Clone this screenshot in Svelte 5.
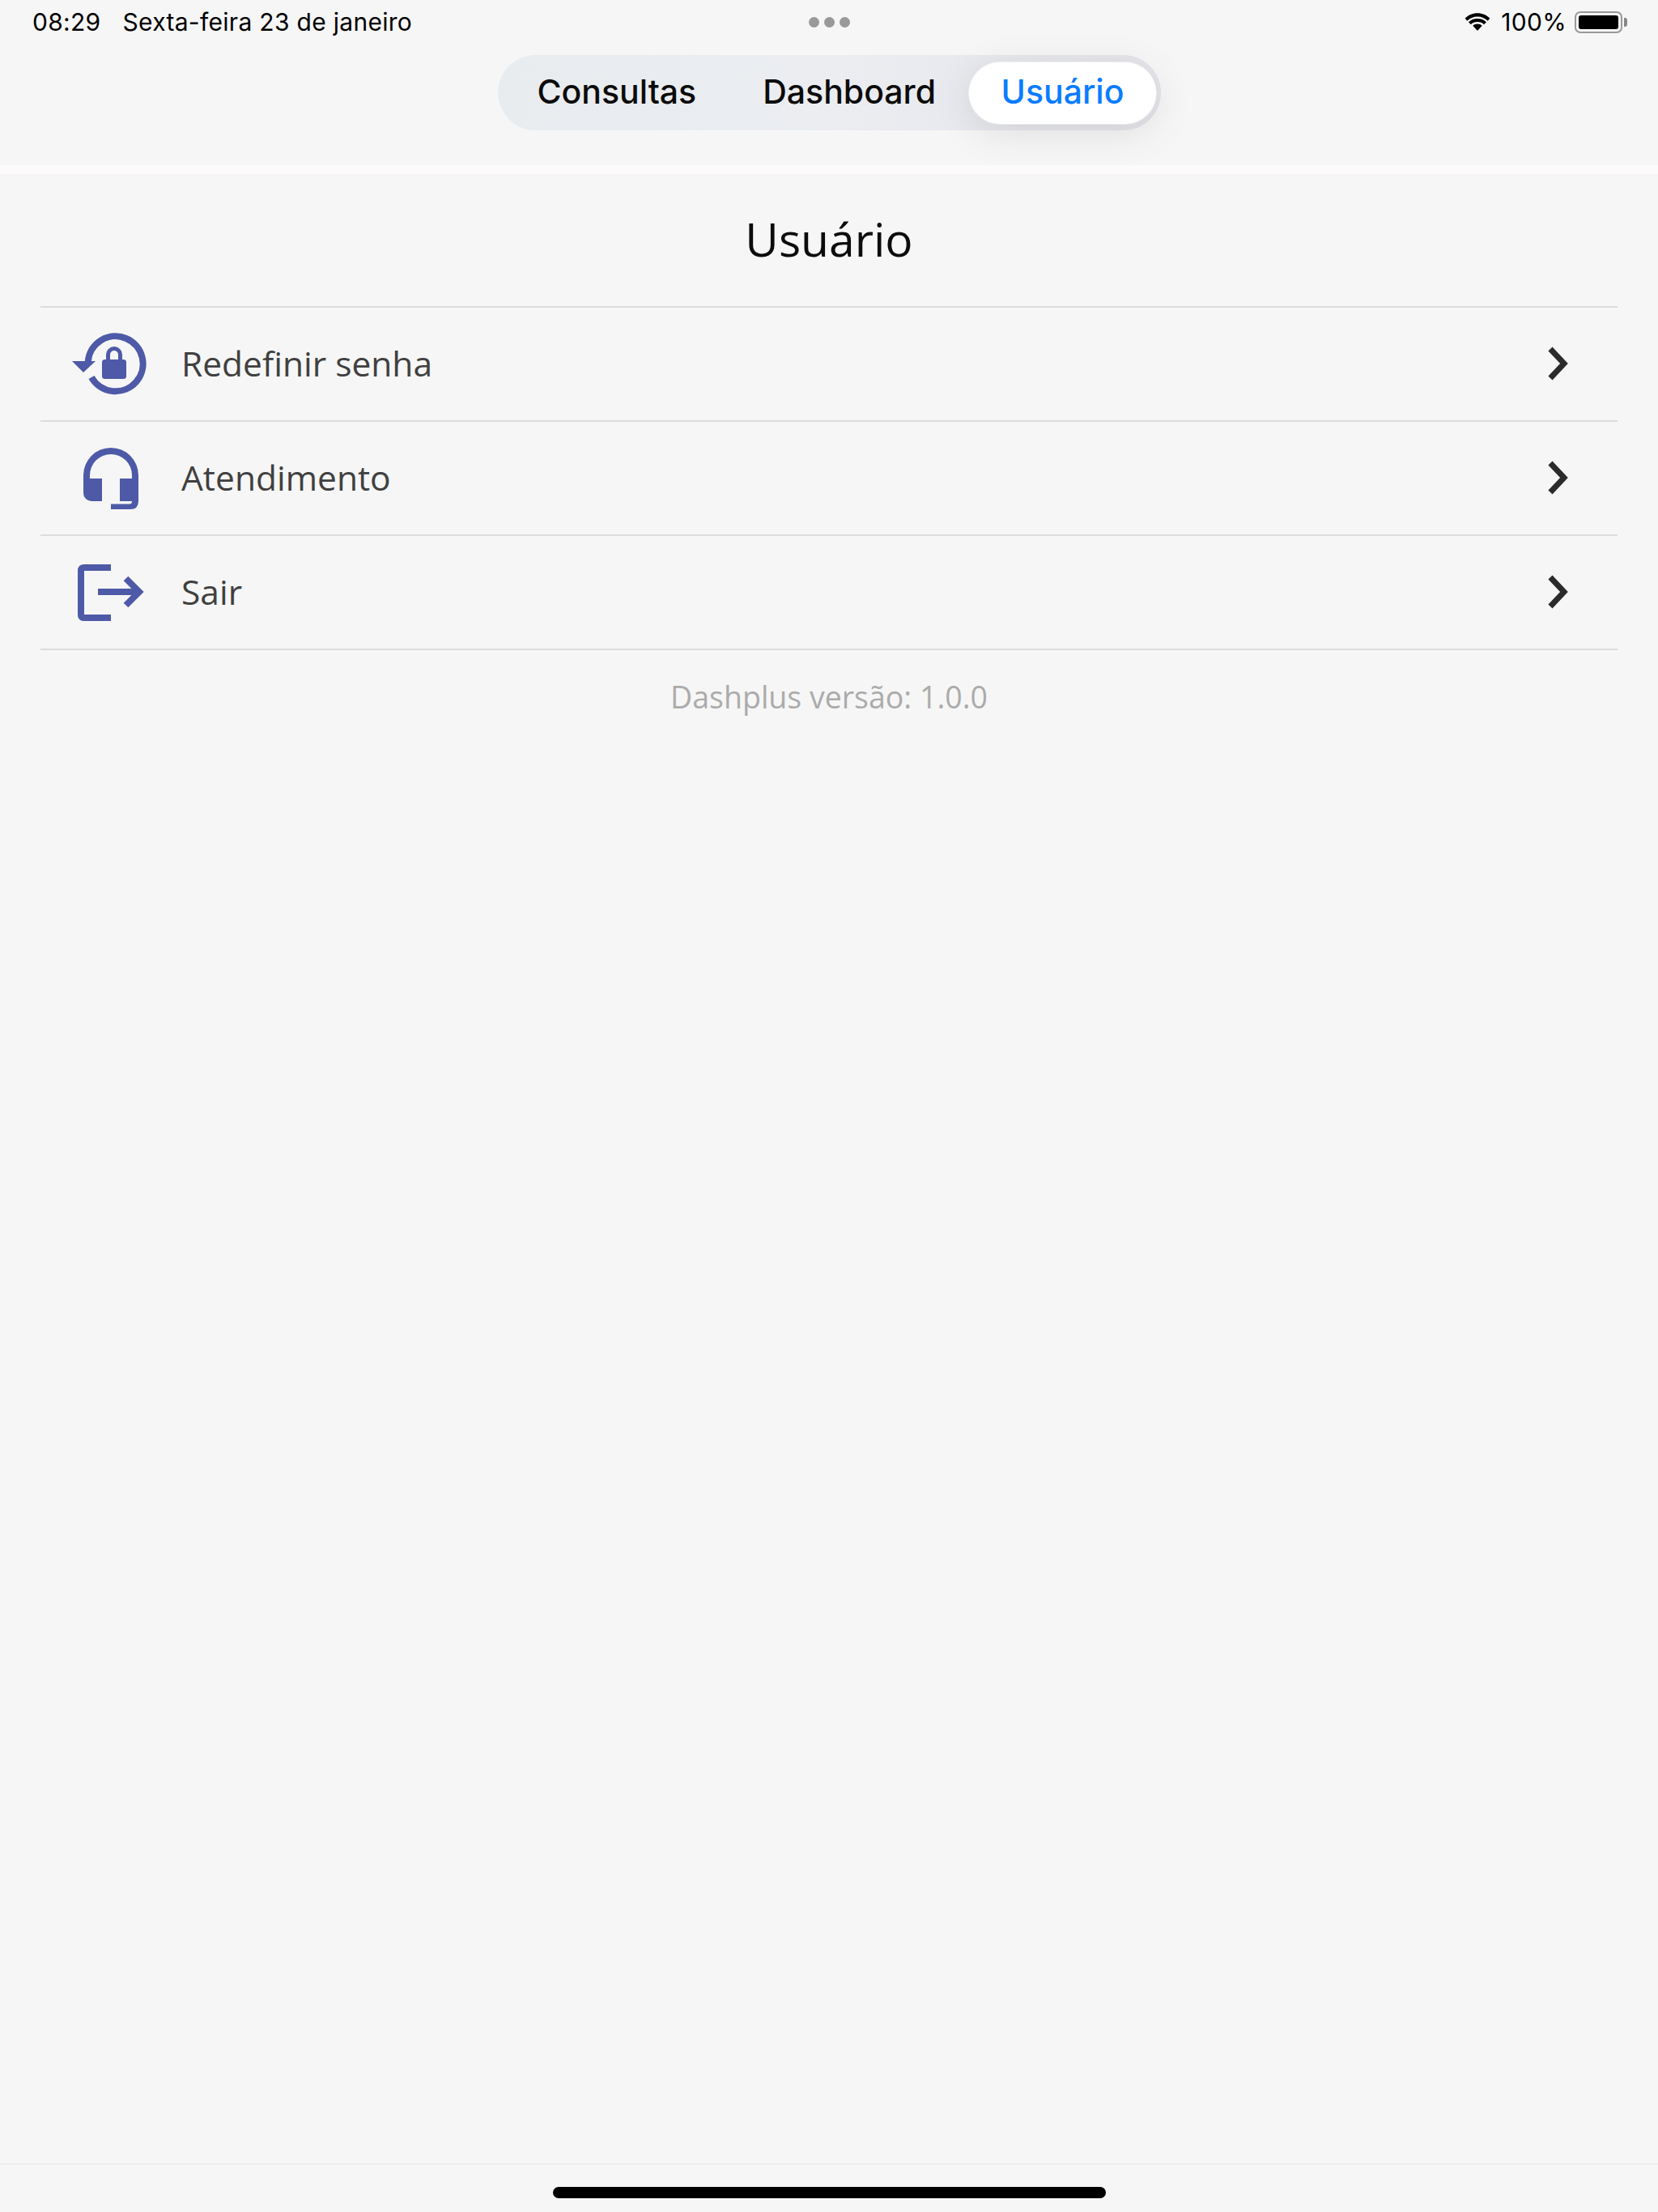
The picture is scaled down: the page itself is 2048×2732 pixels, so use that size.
<script>
  const tabs = [
    { label: 'Consultas', active: false },
    { label: 'Dashboard', active: false },
    { label: 'Usuário', active: true }
  ];

  const rows = [
    { id: 'senha', label: 'Redefinir senha' },
    { id: 'atendimento', label: 'Atendimento' },
    { id: 'sair', label: 'Sair' }
  ];
</script>

<div class="page">
  <header class="top">
    <div class="status">
      <div class="status-left">
        <span>08:29</span>
        <span>Sexta-feira 23 de janeiro</span>
      </div>
      <div class="dots"><i></i><i></i><i></i></div>
      <div class="status-right">
        <svg class="wifi" viewBox="0 0 36 26" width="36" height="26">
          <path d="M18 6.500c5 0 9.300 2 12.600 5.200l2.800-3C29.300 4.700 24 2.300 18 2.300S6.700 4.700 2.600 8.700l2.800 3C8.700 8.500 13 6.500 18 6.500z" fill="#000" />
          <path d="M18 13c3.200 0 6 1.200 8.200 3.200l2.800-3C26.100 10.500 22.300 9 18 9s-8.100 1.500-11 4.200l2.800 3c2.200-2 5-3.200 8.200-3.200z" fill="#000" />
          <path d="M18 15.500c-2.200 0-4.200.8-5.700 2.200L18 24l5.700-6.300c-1.500-1.400-3.500-2.200-5.700-2.200z" fill="#000" />
        </svg>
        <span class="pct">100%</span>
        <div class="battery"><div class="battery-fill"></div></div>
        <div class="battery-nub"></div>
      </div>
    </div>

    <nav class="tabs">
      {#each tabs as tab}
        <div class="tab" class:active={tab.active}>{tab.label}</div>
      {/each}
    </nav>
  </header>

  <div class="strip"></div>

  <main class="content">
    <h1>Usuário</h1>

    <ul class="list">
      {#each rows as row}
        <li class="row">
          <span class="icon">
            {#if row.id === 'senha'}
              <svg viewBox="84 399 100 100" width="100" height="100">
                <path d="M108.700 446 A34 34 0 1 1 113 465" fill="none" stroke="#4e5aa8" stroke-width="8" />
                <path d="M89 445 H118 L103 459 Z" fill="#4e5aa8" />
                <rect x="126" y="443" width="30" height="24" rx="3.500" fill="#4e5aa8" />
                <path d="M133.500 445 V437 A7.500 7.500 0 0 1 148.500 437 V445" fill="none" stroke="#4e5aa8" stroke-width="5" />
              </svg>
            {:else if row.id === 'atendimento'}
              <svg viewBox="84 540 100 100" width="100" height="100">
                <path d="M103 590 V586 A34 34 0 0 1 171 586 V590 H163 V586 A26 26 0 0 0 111 586 V590 Z" fill="#4e5aa8" />
                <path d="M103 590 H126 V618 H113 A10 10 0 0 1 103 608 Z" fill="#4e5aa8" />
                <path d="M148 590 H171 V618 Q171 628 161 628 H137 V621.500 H160 Q163 621.500 163 618 H148 Z" fill="#4e5aa8" />
              </svg>
            {:else}
              <svg viewBox="84 682 100 100" width="100" height="100">
                <path d="M137 701 H104 Q100 701 100 705 V759 Q100 763 104 763 H137" fill="none" stroke="#4e5aa8" stroke-width="8" />
                <path d="M121 731 H172" fill="none" stroke="#4e5aa8" stroke-width="8" />
                <path d="M155.500 714.500 L172 731 L155.500 747.500" fill="none" stroke="#4e5aa8" stroke-width="8" />
              </svg>
            {/if}
          </span>
          <span class="label">{row.label}</span>
          <svg class="chevron" viewBox="0 0 30 44" width="30" height="44">
            <path d="M4 4 L21 22 L4 40" fill="none" stroke="#2b2b2b" stroke-width="7" />
          </svg>
        </li>
      {/each}
    </ul>

    <p class="version">Dashplus versão: 1.0.0</p>
  </main>

  <footer class="home">
    <div class="handle"></div>
  </footer>
</div>

<style>
  :global(body) {
    background: #f6f6f6;
  }

  .page {
    display: flex;
    flex-direction: column;
    width: 2048px;
    height: 2732px;
    background: #f6f6f6;
    overflow: hidden;
  }

  /* ── Status bar + tabs ───────────────────────────────── */
  .top {
    height: 204px;
    box-sizing: border-box;
    flex-shrink: 0;
  }

  .status {
    display: flex;
    align-items: center;
    height: 54px;
    padding: 0 38px 0 40px;
    font-family: Inter, "Liberation Sans", sans-serif;
    font-size: 30px;
    letter-spacing: 0.3px;
    color: #000;
  }

  .status-left {
    flex: 1;
    display: flex;
    gap: 27px;
  }

  .status-right {
    flex: 1;
    display: flex;
    justify-content: flex-end;
    align-items: center;
  }

  .dots {
    display: flex;
    gap: 6px;
    margin-left: -2px;
  }

  .dots i {
    width: 13px;
    height: 13px;
    border-radius: 50%;
    background: #999;
  }

  .wifi {
    margin-right: 11px;
  }

  .pct {
    margin-right: 10px;
  }

  .battery {
    box-sizing: border-box;
    width: 59px;
    height: 27px;
    padding: 3px;
    border: 2px solid #999;
    border-radius: 7px;
  }

  .battery-fill {
    height: 100%;
    background: #000;
    border-radius: 3px;
  }

  .battery-nub {
    width: 4px;
    height: 11px;
    margin-left: 2px;
    background: #888;
    border-radius: 0 3px 3px 0;
  }

  .tabs {
    display: flex;
    align-items: center;
    box-sizing: border-box;
    width: 819px;
    height: 93px;
    margin: 14px auto 0;
    padding: 0 5px 4px 49px;
    border-radius: 47px;
    background: linear-gradient(90deg, #e8ecef, #ebedf1 50%, #e4e4e9);
    font-family: Inter, "Liberation Sans", sans-serif;
    font-size: 41px;
    font-weight: 500;
    color: #0b0b0b;
    gap: 82px;
  }

  .tab {
    flex-shrink: 0;
  }

  .tab.active {
    display: flex;
    align-items: center;
    justify-content: center;
    box-sizing: border-box;
    width: 231px;
    height: 76px;
    margin: 4px 0 0 -41px;
    padding-bottom: 3px;
    border-radius: 38px;
    background: #fff;
    color: #0a7cff;
    box-shadow: 0 0 0 1px rgba(255, 255, 255, 0.5), 0 10px 50px rgba(0, 0, 0, 0.1);
  }

  .strip {
    position: relative;
    height: 11px;
    flex-shrink: 0;
    background: #fdfafc;
  }

  /* ── Content ─────────────────────────────────────────── */
  .content {
    flex: 1;
    padding: 0 50px;
    font-family: "Open Sans", "Noto Sans", sans-serif;
  }

  h1 {
    margin: 0;
    height: 163px;
    box-sizing: border-box;
    padding-top: 42px;
    text-align: center;
    font-size: 57px;
    line-height: 76px;
    font-weight: 400;
    color: #0c0c0c;
  }

  .list {
    margin: 0;
    padding: 0;
    list-style: none;
    border-top: 2px solid #dcdcdc;
  }

  .row {
    display: flex;
    align-items: center;
    box-sizing: border-box;
    height: 141px;
    padding-left: 34px;
    border-bottom: 2px solid #dcdcdc;
  }

  .icon {
    display: flex;
    width: 100px;
    height: 100px;
    margin-right: 40px;
  }

  .label {
    flex: 1;
    margin-bottom: 3px;
    font-size: 42.500px;
    color: #404040;
  }

  .chevron {
    margin: 0 57px 1px 0;
  }

  .version {
    margin: 33px 0 0;
    text-align: center;
    font-size: 37.500px;
    line-height: 50px;
    color: #ababab;
  }

  /* ── Home indicator ──────────────────────────────────── */
  .home {
    display: flex;
    justify-content: center;
    box-sizing: border-box;
    height: 60px;
    padding-top: 27px;
    flex-shrink: 0;
    border-top: 2px solid #eeeeee;
  }

  .handle {
    width: 683px;
    height: 14px;
    border-radius: 7px;
    background: #000;
  }
</style>
